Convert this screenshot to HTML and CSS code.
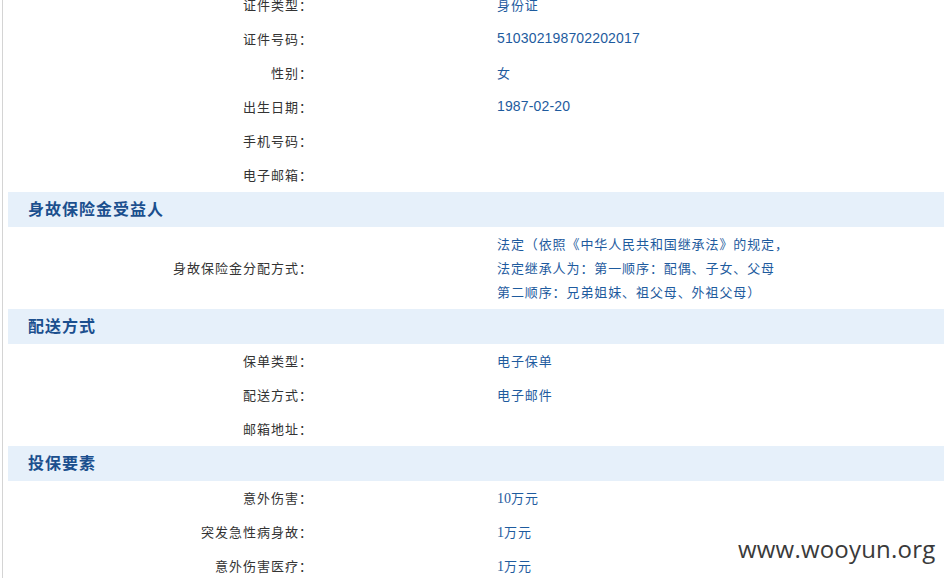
FILE: index.html
```html
<!DOCTYPE html>
<html lang="zh-CN">
<head>
<meta charset="utf-8">
<link rel="stylesheet" href="styles.css">
</head>
<body>
<div class="page">
  <div class="sheet">
    <div class="row"><div class="label">证件类型：</div><div class="value">身份证</div></div>
    <div class="row"><div class="label">证件号码：</div><div class="value num">510302198702202017</div></div>
    <div class="row"><div class="label">性别：</div><div class="value">女</div></div>
    <div class="row"><div class="label">出生日期：</div><div class="value num">1987-02-20</div></div>
    <div class="row"><div class="label">手机号码：</div><div class="value"></div></div>
    <div class="row"><div class="label">电子邮箱：</div><div class="value"></div></div>

    <div class="section">身故保险金受益人</div>
    <div class="row multi"><div class="label">身故保险金分配方式：</div><div class="value">法定（依照《中华人民共和国继承法》的规定，<br>法定继承人为：第一顺序：配偶、子女、父母<br>第二顺序：兄弟姐妹、祖父母、外祖父母）</div></div>

    <div class="section">配送方式</div>
    <div class="row"><div class="label">保单类型：</div><div class="value">电子保单</div></div>
    <div class="row"><div class="label">配送方式：</div><div class="value">电子邮件</div></div>
    <div class="row"><div class="label">邮箱地址：</div><div class="value"></div></div>

    <div class="section">投保要素</div>
    <div class="row"><div class="label">意外伤害：</div><div class="value"><span class="serif">10</span>万元</div></div>
    <div class="row"><div class="label">突发急性病身故：</div><div class="value"><span class="serif">1</span>万元</div></div>
    <div class="row"><div class="label">意外伤害医疗：</div><div class="value"><span class="serif">1</span>万元</div></div>
  </div>
  <div class="watermark">www.wooyun.org</div>
</div>
</body>
</html>
```
FILE: styles.css
```css
html, body {
  margin: 0;
  padding: 0;
  background: #ffffff;
  overflow: hidden;
}
body {
  font-family: "Noto Sans CJK SC", "Liberation Sans", sans-serif;
  font-size: 13px;
  color: #333333;
}
.page {
  position: relative;
  width: 944px;
  height: 578px;
  overflow: hidden;
}
.sheet {
  margin-left: 2px;
  margin-top: -12px;
  border-left: 1px solid #d4d4d4;
  padding-left: 5px;
  min-height: 600px;
}
.row {
  display: flex;
  align-items: center;
  box-sizing: border-box;
  height: 34px;
  padding-bottom: 2px;
}
.row.multi {
  height: 82px;
  padding-bottom: 1px;
}
.label {
  width: 305px;
  flex: none;
  text-align: right;
  color: #333333;
  letter-spacing: 1px;
}
.value {
  margin-left: 184px;
  color: #1e5b9e;
  letter-spacing: 0.9px;
}
.multi .value {
  line-height: 24px;
}
.num {
  font-family: "Liberation Sans", sans-serif;
  font-size: 14px;
  letter-spacing: 0.15px;
}
.serif {
  font-family: "Liberation Serif", serif;
  font-size: 14px;
  letter-spacing: 0;
}
.section {
  box-sizing: border-box;
  height: 35px;
  display: flex;
  align-items: center;
  padding-bottom: 3px;
  background: #e6f0fa;
  padding-left: 20px;
  font-size: 16px;
  font-weight: bold;
  letter-spacing: 1px;
  color: #1b4f8e;
}
.watermark {
  position: absolute;
  left: 738px;
  top: 532px;
  font-family: "Open Sans", sans-serif;
  font-size: 24px;
  color: #3a3a3a;
  letter-spacing: 0.2px;
}
```
